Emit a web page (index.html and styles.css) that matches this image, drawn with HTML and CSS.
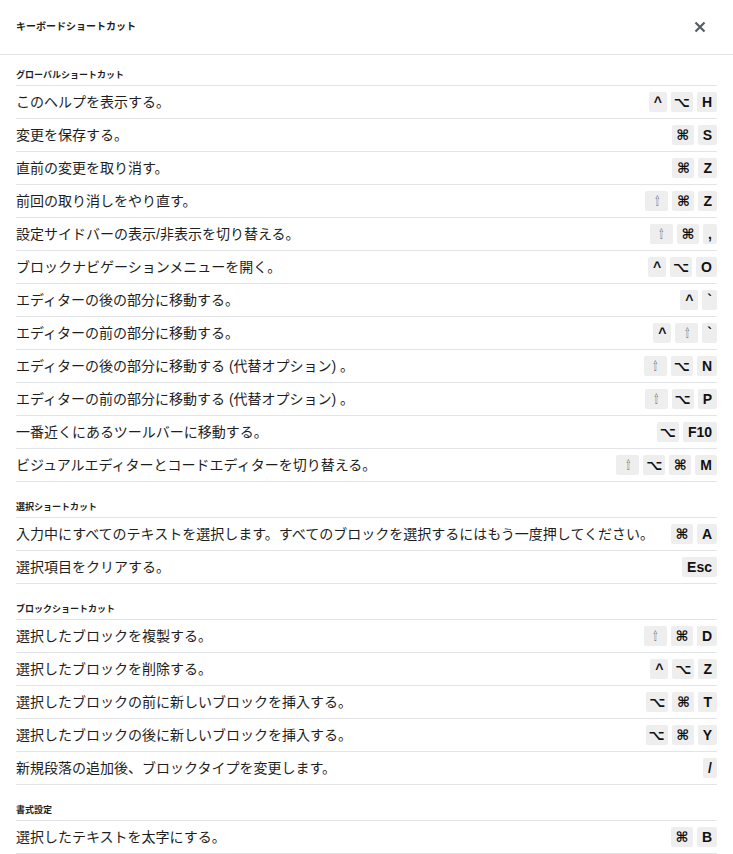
FILE: index.html
```html
<!DOCTYPE html>
<html lang="ja">
<head>
<meta charset="utf-8">
<title>キーボードショートカット</title>
<link rel="stylesheet" href="styles.css">
</head>
<body>
<div class="modal">
  <header class="modal-header">
    <h1 class="modal-title">キーボードショートカット</h1>
    <button class="close" aria-label="閉じる">
      <svg width="14" height="14" viewBox="0 0 14 14" aria-hidden="true"><path d="M2.5 2.5 L11.5 11.5 M11.5 2.5 L2.5 11.5" stroke="#555d66" stroke-width="2.2" fill="none"/></svg>
    </button>
  </header>

  <section class="sc-section">
    <h2 class="sc-title">グローバルショートカット</h2>
    <ul class="sc-list">
      <li class="sc-row"><span class="sc-desc">このヘルプを表示する。</span><span class="sc-keys"><kbd>^</kbd><kbd class="sym">⌥</kbd><kbd>H</kbd></span></li>
      <li class="sc-row"><span class="sc-desc">変更を保存する。</span><span class="sc-keys"><kbd class="sym">⌘</kbd><kbd>S</kbd></span></li>
      <li class="sc-row"><span class="sc-desc">直前の変更を取り消す。</span><span class="sc-keys"><kbd class="sym">⌘</kbd><kbd>Z</kbd></span></li>
      <li class="sc-row"><span class="sc-desc">前回の取り消しをやり直す。</span><span class="sc-keys"><kbd class="shift"><span>⇧</span></kbd><kbd class="sym">⌘</kbd><kbd>Z</kbd></span></li>
      <li class="sc-row"><span class="sc-desc">設定サイドバーの表示/非表示を切り替える。</span><span class="sc-keys"><kbd class="shift"><span>⇧</span></kbd><kbd class="sym">⌘</kbd><kbd>,</kbd></span></li>
      <li class="sc-row"><span class="sc-desc">ブロックナビゲーションメニューを開く。</span><span class="sc-keys"><kbd>^</kbd><kbd class="sym">⌥</kbd><kbd>O</kbd></span></li>
      <li class="sc-row"><span class="sc-desc">エディターの後の部分に移動する。</span><span class="sc-keys"><kbd>^</kbd><kbd>`</kbd></span></li>
      <li class="sc-row"><span class="sc-desc">エディターの前の部分に移動する。</span><span class="sc-keys"><kbd>^</kbd><kbd class="shift"><span>⇧</span></kbd><kbd>`</kbd></span></li>
      <li class="sc-row"><span class="sc-desc">エディターの後の部分に移動する (代替オプション) 。</span><span class="sc-keys"><kbd class="shift"><span>⇧</span></kbd><kbd class="sym">⌥</kbd><kbd>N</kbd></span></li>
      <li class="sc-row"><span class="sc-desc">エディターの前の部分に移動する (代替オプション) 。</span><span class="sc-keys"><kbd class="shift"><span>⇧</span></kbd><kbd class="sym">⌥</kbd><kbd>P</kbd></span></li>
      <li class="sc-row"><span class="sc-desc">一番近くにあるツールバーに移動する。</span><span class="sc-keys"><kbd class="sym">⌥</kbd><kbd>F10</kbd></span></li>
      <li class="sc-row"><span class="sc-desc">ビジュアルエディターとコードエディターを切り替える。</span><span class="sc-keys"><kbd class="shift"><span>⇧</span></kbd><kbd class="sym">⌥</kbd><kbd class="sym">⌘</kbd><kbd>M</kbd></span></li>
    </ul>
  </section>

  <section class="sc-section">
    <h2 class="sc-title">選択ショートカット</h2>
    <ul class="sc-list">
      <li class="sc-row"><span class="sc-desc">入力中にすべてのテキストを選択します。すべてのブロックを選択するにはもう一度押してください。</span><span class="sc-keys"><kbd class="sym">⌘</kbd><kbd>A</kbd></span></li>
      <li class="sc-row"><span class="sc-desc">選択項目をクリアする。</span><span class="sc-keys"><kbd>Esc</kbd></span></li>
    </ul>
  </section>

  <section class="sc-section">
    <h2 class="sc-title">ブロックショートカット</h2>
    <ul class="sc-list">
      <li class="sc-row"><span class="sc-desc">選択したブロックを複製する。</span><span class="sc-keys"><kbd class="shift"><span>⇧</span></kbd><kbd class="sym">⌘</kbd><kbd>D</kbd></span></li>
      <li class="sc-row"><span class="sc-desc">選択したブロックを削除する。</span><span class="sc-keys"><kbd>^</kbd><kbd class="sym">⌥</kbd><kbd>Z</kbd></span></li>
      <li class="sc-row"><span class="sc-desc">選択したブロックの前に新しいブロックを挿入する。</span><span class="sc-keys"><kbd class="sym">⌥</kbd><kbd class="sym">⌘</kbd><kbd>T</kbd></span></li>
      <li class="sc-row"><span class="sc-desc">選択したブロックの後に新しいブロックを挿入する。</span><span class="sc-keys"><kbd class="sym">⌥</kbd><kbd class="sym">⌘</kbd><kbd>Y</kbd></span></li>
      <li class="sc-row"><span class="sc-desc">新規段落の追加後、ブロックタイプを変更します。</span><span class="sc-keys"><kbd>/</kbd></span></li>
    </ul>
  </section>

  <section class="sc-section">
    <h2 class="sc-title">書式設定</h2>
    <ul class="sc-list">
      <li class="sc-row"><span class="sc-desc">選択したテキストを太字にする。</span><span class="sc-keys"><kbd class="sym">⌘</kbd><kbd>B</kbd></span></li>
    </ul>
  </section>
</div>
</body>
</html>
```

FILE: styles.css
```css
html, body {
  margin: 0;
  padding: 0;
  background: #ffffff;
}

body {
  font-family: "Liberation Sans", "Noto Sans CJK JP", sans-serif;
  color: #1e1e1e;
}

.modal {
  display: flex;
  flex-direction: column;
}

.modal-header {
  height: 54px;
  border-bottom: 1px solid #e2e4e7;
  display: flex;
  align-items: center;
  justify-content: space-between;
  padding: 0 16px;
}

.modal-title {
  margin: 0;
  font-size: 10px;
  font-weight: 700;
  line-height: 16px;
  color: #1e1e1e;
}

.close {
  width: 34px;
  height: 34px;
  border: 0;
  padding: 0;
  background: transparent;
  display: flex;
  align-items: center;
  justify-content: center;
}

.sc-section {
  padding: 0 16px;
}

.sc-title {
  margin: 0;
  padding: 12px 0 2px;
  font-size: 9px;
  font-weight: 700;
  line-height: 16px;
  color: #1e1e1e;
}

.sc-section + .sc-section .sc-title {
  padding-top: 17px;
}

.sc-list {
  list-style: none;
  margin: 0;
  padding: 0;
  border-bottom: 1px solid #e2e4e7;
}

.sc-row {
  height: 32px;
  border-top: 1px solid #e2e4e7;
  display: flex;
  align-items: center;
  justify-content: space-between;
}

.sc-desc {
  font-size: 14px;
  line-height: 20px;
  white-space: nowrap;
}

.sc-keys {
  display: flex;
  gap: 4px;
}

kbd {
  display: inline-flex;
  align-items: center;
  justify-content: center;
  height: 20px;
  padding: 0 5px;
  background: #eeeeee;
  border-radius: 2px;
  font-family: "Liberation Sans", "DejaVu Sans", sans-serif;
  font-size: 14px;
  font-weight: 700;
  color: #111111;
}

kbd.sym {
  width: 22px;
  padding: 0;
  font-family: "DejaVu Sans", sans-serif;
  font-size: 14px;
}

kbd.shift {
  width: 23px;
  padding: 0;
  font-family: "DejaVu Sans", sans-serif;
  font-weight: 400;
  font-size: 15px;
  color: #6f757c;
}

kbd.shift span {
  display: inline-block;
  transform: scaleX(0.5);
}
```
